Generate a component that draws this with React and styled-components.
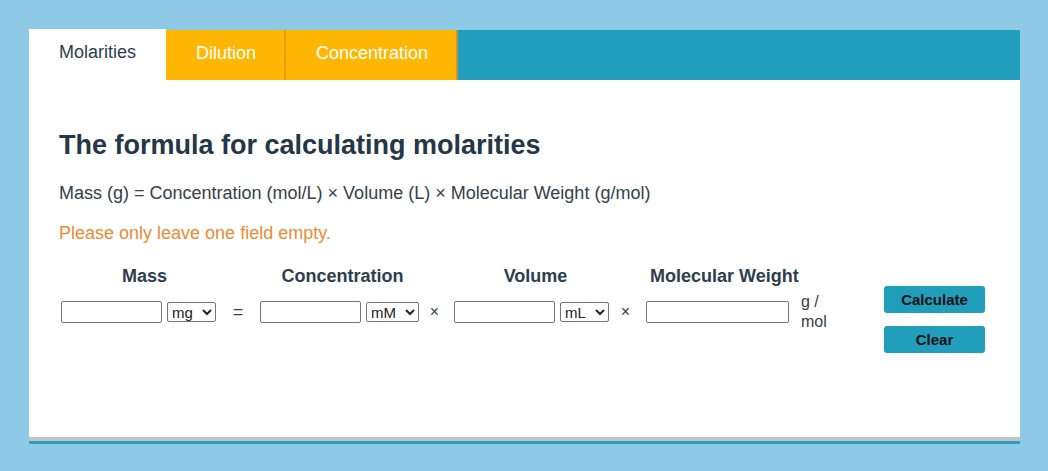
import { useState } from "react";
import styled, { createGlobalStyle } from "styled-components";

const GlobalStyle = createGlobalStyle`
  html, body {
    margin: 0;
    padding: 0;
    background-color: #8ecae6;
    font-family: "Liberation Sans", Arial, sans-serif;
  }
`;

const Page = styled.div`
  padding: 30px 28px 30px 29px;
  min-height: 471px;
  box-sizing: border-box;
`;

const Card = styled.div`
  width: 991px;
  background-color: #fff;
  display: flex;
  flex-direction: column;
`;

const TabBar = styled.nav`
  display: flex;
  height: 50px;
  background-color: #219ebc;
`;

const Tab = styled.button`
  display: flex;
  align-items: center;
  padding: 0 ${(p) => (p.$edge ? 28 : 30)}px 4px 30px;
  border: none;
  border-right: ${(p) => (p.$edge ? `2px solid ${p.$edge}` : "none")};
  background-color: ${(p) => (p.$active ? "#fff" : "#ffb703")};
  color: ${(p) => (p.$active ? "#2c3e50" : "#fff")};
  font-family: inherit;
  font-size: 18px;
  cursor: pointer;
  margin-top: ${(p) => (p.$active ? "-1px" : "0")};
`;

const Content = styled.section`
  padding: 49px 30px 0;
  height: 357px;
  box-sizing: border-box;
`;

const Title = styled.h2`
  margin: 0;
  font-size: 27px;
  line-height: 32px;
  font-weight: 700;
  color: #253746;
`;

const Formula = styled.p`
  margin: 20px 0 0;
  font-size: 18px;
  line-height: 24px;
  color: #34404c;
`;

const Warning = styled.p`
  margin: 16px 0 0;
  font-size: 18px;
  line-height: 24px;
  color: #ee8a33;
`;

const Grid = styled.div`
  margin-top: 19px;
  display: grid;
  grid-template-columns: 159px 40px 163px 31px 159px 33px 147px 93px 101px;
  grid-template-rows: 24px 48px;
  color: #2c3e50;
`;

const HeadCell = styled.div`
  font-size: 18px;
  line-height: 24px;
  font-weight: 700;
  text-align: center;
  white-space: nowrap;
  padding-left: ${(p) => p.$shift ?? 6}px;
`;

const InputCell = styled.div`
  grid-row: 2;
  display: flex;
  align-items: center;
  gap: 5px;
  padding: 0 2px;
`;

const Op = styled.div`
  grid-row: 2;
  display: flex;
  align-items: center;
  justify-content: center;
  font-size: ${(p) => (p.$eq ? 18 : 16)}px;
  color: #34404c;
  padding-right: ${(p) => p.$nudge || 0}px;
`;

const Field = styled.input`
  width: ${(p) => p.$w || 101}px;
  height: 22px;
  box-sizing: border-box;
  border: 1px solid #767676;
  border-radius: 2px;
  padding: 1px 3px;
  font-family: inherit;
  font-size: 15px;
`;

const Unit = styled.select`
  width: ${(p) => p.$w || 49}px;
  height: 20px;
  box-sizing: border-box;
  border: 1px solid #767676;
  border-radius: 2px;
  background-color: #fff;
  font-family: inherit;
  font-size: 15px;
  color: #222;
  padding: 0;
`;

const UnitText = styled.div`
  grid-row: 2;
  display: flex;
  align-items: center;
  padding-left: 10px;
  width: 36px;
  font-size: 16px;
  line-height: 20px;
  color: #34404c;
`;

const Actions = styled.div`
  grid-column: 9;
  grid-row: 1 / span 2;
  display: flex;
  flex-direction: column;
  gap: 13px;
  padding-top: 22px;
`;

const ActionButton = styled.button`
  flex: none;
  width: 101px;
  height: 27px;
  border: none;
  border-radius: 3px;
  background-color: #219ebc;
  color: #111;
  font-family: inherit;
  font-size: 15px;
  font-weight: 700;
  cursor: pointer;
`;

const Footer = styled.div`
  border-top: 4px solid #c3c3c3;
  height: 3px;
  background-color: #2f9dbd;
`;

const tabs = [
  { id: "molarities", label: "Molarities" },
  { id: "dilution", label: "Dilution", edge: "#f29a0e" },
  { id: "concentration", label: "Concentration", edge: "#c1983a" },
];

export default function App() {
  const [active, setActive] = useState("molarities");
  const [values, setValues] = useState({ mass: "", conc: "", vol: "", mw: "" });

  const set = (key) => (e) => setValues({ ...values, [key]: e.target.value });

  return (
    <>
      <GlobalStyle />
      <Page>
        <Card>
          <TabBar>
            {tabs.map((t) => (
              <Tab
                key={t.id}
                $active={active === t.id}
                $edge={t.edge}
                onClick={() => setActive(t.id)}
              >
                {t.label}
              </Tab>
            ))}
          </TabBar>
          <Content>
            <Title>The formula for calculating molarities</Title>
            <Formula>
              Mass (g) = Concentration (mol/L) × Volume (L) × Molecular Weight (g/mol)
            </Formula>
            <Warning>Please only leave one field empty.</Warning>
            <Grid>
              <HeadCell $shift={12}>Mass</HeadCell>
              <div />
              <HeadCell>Concentration</HeadCell>
              <div />
              <HeadCell $shift={8}>Volume</HeadCell>
              <div />
              <HeadCell $shift={6}>Molecular Weight</HeadCell>
              <div />

              <InputCell>
                <Field value={values.mass} onChange={set("mass")} />
                <Unit defaultValue="mg">
                  <option>mg</option>
                  <option>g</option>
                  <option>kg</option>
                </Unit>
              </InputCell>
              <Op $eq>=</Op>
              <InputCell>
                <Field value={values.conc} onChange={set("conc")} />
                <Unit $w={53} defaultValue="mM">
                  <option>mM</option>
                  <option>M</option>
                  <option>µM</option>
                </Unit>
              </InputCell>
              <Op $nudge={4}>×</Op>
              <InputCell>
                <Field value={values.vol} onChange={set("vol")} />
                <Unit defaultValue="mL">
                  <option>mL</option>
                  <option>L</option>
                  <option>µL</option>
                </Unit>
              </InputCell>
              <Op $nudge={4}>×</Op>
              <InputCell>
                <Field $w={143} value={values.mw} onChange={set("mw")} />
              </InputCell>
              <UnitText>g / mol</UnitText>

              <Actions>
                <ActionButton>Calculate</ActionButton>
                <ActionButton
                  onClick={() => setValues({ mass: "", conc: "", vol: "", mw: "" })}
                >
                  Clear
                </ActionButton>
              </Actions>
            </Grid>
          </Content>
          <Footer />
        </Card>
      </Page>
    </>
  );
}
